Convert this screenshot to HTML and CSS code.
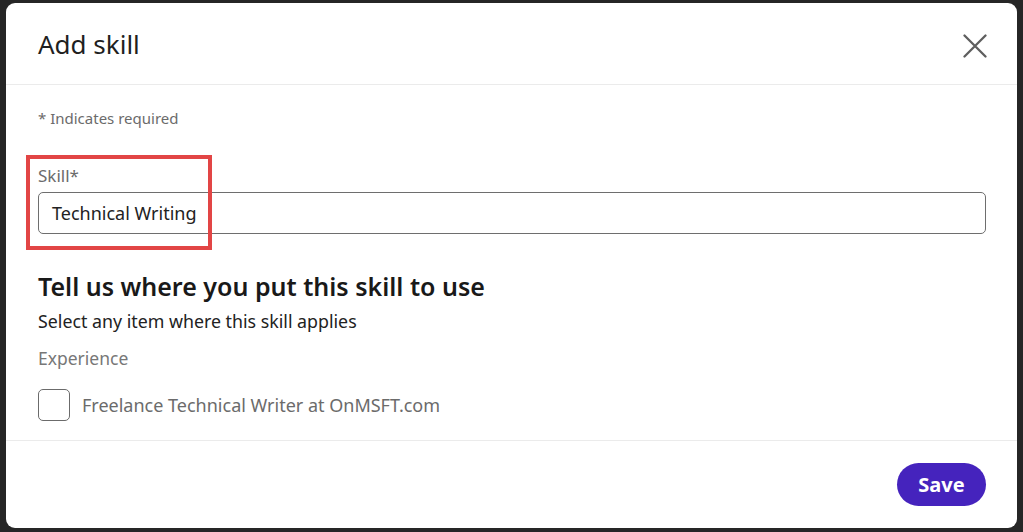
FILE: index.html
```html
<!DOCTYPE html>
<html lang="en">
<head>
<meta charset="utf-8">
<title>Add skill</title>
<link rel="stylesheet" href="styles.css">
</head>
<body>
<div class="backdrop">
  <div class="modal">
    <div class="modal-header">
      <h2 class="title">Add skill</h2>
      <button class="close" aria-label="Close">
        <svg width="24" height="24" viewBox="0 0 24 24"><path d="M1.5 1.5 L22.5 22.5 M22.5 1.5 L1.5 22.5" stroke="#5e5e5e" stroke-width="2.3" stroke-linecap="round" fill="none"/></svg>
      </button>
    </div>
    <div class="modal-body">
      <p class="required">* Indicates required</p>
      <div class="field">
        <label class="field-label">Skill*</label>
        <div class="input">Technical Writing</div>
        <div class="highlight"></div>
      </div>
      <h3 class="section-title">Tell us where you put this skill to use</h3>
      <p class="section-sub">Select any item where this skill applies</p>
      <p class="group-label">Experience</p>
      <div class="check-row">
        <span class="checkbox"></span>
        <span class="check-text">Freelance Technical Writer at OnMSFT.com</span>
      </div>
    </div>
    <div class="modal-footer">
      <button class="save">Save</button>
    </div>
  </div>
</div>
</body>
</html>
```
FILE: styles.css
```css
* { box-sizing: border-box; }
html, body { margin: 0; padding: 0; }
body {
  width: 1023px;
  height: 532px;
  background: #262626;
  font-family: "Noto Sans", "Open Sans", sans-serif;
  overflow: hidden;
}
.backdrop {
  padding: 3px 6px 4px 6px;
  height: 532px;
}
.modal {
  background: #fff;
  border-radius: 9px;
  height: 525px;
  display: flex;
  flex-direction: column;
}
.modal-header {
  height: 82px;
  border-bottom: 1px solid #ebebeb;
  display: flex;
  align-items: center;
  justify-content: space-between;
  padding: 0 30px 0 32px;
}
.title {
  margin: 0;
  font-size: 26px;
  line-height: 34px;
  font-weight: 400;
  color: #1f1f1f;
}
.close {
  background: none;
  border: 0;
  padding: 0;
  width: 24px;
  height: 24px;
  display: flex;
  margin-top: 5px;
}
.modal-body {
  flex: 1;
  padding: 0 31px 0 32px;
  border-bottom: 1px solid #ebebeb;
}
.required {
  margin: 23px 0 0;
  font-size: 15px;
  line-height: 20px;
  color: #6b6b6b;
}
.field {
  position: relative;
  margin-top: 38px;
}
.field-label {
  display: block;
  font-size: 17px;
  color: #6b6b6b;
  line-height: 20px;
}
.input {
  margin-top: 6px;
  height: 42px;
  border: 1px solid #6e6e6e;
  border-radius: 5px;
  padding: 0 13px;
  display: flex;
  align-items: center;
  font-size: 18px;
  color: #222;
}
.highlight {
  position: absolute;
  left: -12px;
  top: -11px;
  width: 186px;
  height: 95px;
  border: 4px solid #e24545;
}
.section-title {
  margin: 36px 0 0;
  font-size: 25px;
  font-weight: 600;
  color: #191919;
  line-height: 32px;
}
.section-sub {
  margin: 7px 0 0;
  font-size: 17.8px;
  color: #222;
  line-height: 24px;
}
.group-label {
  margin: 13px 0 0;
  font-size: 17.5px;
  color: #777;
  line-height: 24px;
}
.check-row {
  margin-top: 19px;
  display: flex;
  align-items: center;
  gap: 12px;
}
.checkbox {
  width: 32px;
  height: 32px;
  border: 1.5px solid #6b6b6b;
  border-radius: 5px;
}
.check-text {
  font-size: 18px;
  color: #6b6b6b;
}
.modal-footer {
  height: 87px;
  display: flex;
  align-items: center;
  justify-content: flex-end;
  padding: 0 31px 0 0;
}
.save {
  background: #4523bd;
  color: #fff;
  border: 0;
  border-radius: 22px;
  height: 43px;
  width: 89px;
  font-family: inherit;
  font-size: 20px;
  font-weight: 700;
}
```
